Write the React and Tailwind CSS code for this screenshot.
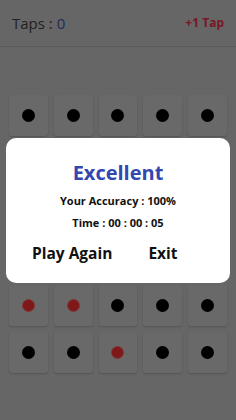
import { useState } from "react";

const ROWS = 6;
const COLS = 5;
// cells that were tapped wrong, shown in red
const missed = ["4-0", "4-1", "5-2"];

function Dot({ red }) {
  return red ? (
    <span className="block w-[13px] h-[13px] rounded-full bg-[#ff3030] border border-[#ff7070]" />
  ) : (
    <span className="block w-[13px] h-[13px] rounded-full bg-black" />
  );
}

export default function App() {
  const [taps] = useState(0);

  return (
    <div className="relative w-[236px] h-[420px] overflow-hidden bg-[#cccccc]" style={{ fontFamily: '"Open Sans", sans-serif' }}>
      <div className="h-[47px] flex items-center justify-between px-3 border-b border-[#b4b4b4]">
        <div className="text-[15px] text-[#444]">
          Taps : <span className="text-[#4a5aa8]">{taps}</span>
        </div>
        <div className="text-[12px] font-bold text-[#f03048]">+1 Tap</div>
      </div>

      <div className="mt-[48px] px-[9px] grid grid-cols-5 gap-x-[6px] gap-y-[6.4px]">
        {Array.from({ length: ROWS * COLS }).map((_, i) => {
          const r = Math.floor(i / COLS);
          const c = i % COLS;
          return (
            <div key={i} className="h-[41px] rounded-[3px] bg-[#d2d2d2] shadow-[0_1px_2px_rgba(0,0,0,0.18)] flex items-center justify-center">
              <Dot red={missed.includes(`${r}-${c}`)} />
            </div>
          );
        })}
      </div>

      <div className="absolute inset-0 bg-black/50 flex items-center justify-center">
        <div className="w-[224px] h-[145px] bg-white rounded-[10px] flex flex-col items-center pt-[20px]">
          <div className="text-[20px] leading-[30px] font-bold text-[#3347b0]">Excellent</div>
          <div className="mt-[4px] text-[11px] leading-[18px] font-bold text-[#111]">Your Accuracy : 100%</div>
          <div className="mt-[4px] text-[11px] leading-[18px] font-bold text-[#111]">Time : 00 : 00 : 05</div>
          <div className="mt-[9px] w-full flex px-[26px] gap-[36px] text-[15.5px] leading-[24px] font-bold text-[#111]">
            <button>Play Again</button>
            <button>Exit</button>
          </div>
        </div>
      </div>
    </div>
  );
}
